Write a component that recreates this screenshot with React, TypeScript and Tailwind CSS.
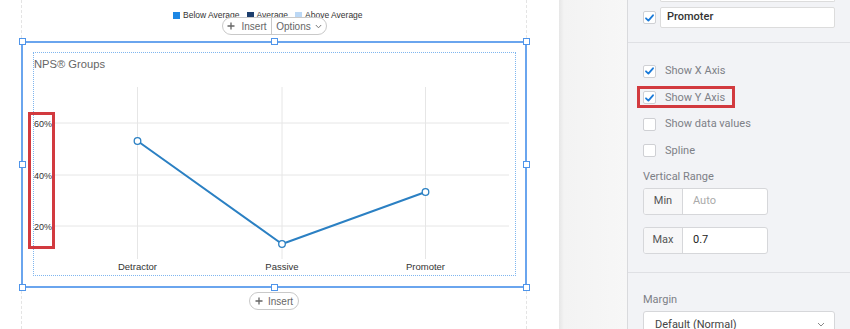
import React from "react";

const Check = ({ checked }: { checked?: boolean }) => (
  <div className="flex h-[13px] w-[13px] shrink-0 items-center justify-center rounded-[2px] border border-[#cfd0d4] bg-white">
    {checked && (
      <svg width="9" height="8" viewBox="0 0 9 8">
        <path d="M1 4.3 L3.4 6.6 L8 1.3" fill="none" stroke="#1a7ad9" strokeWidth="1.8" strokeLinecap="round" strokeLinejoin="round" />
      </svg>
    )}
  </div>
);

const PlusIcon = () => (
  <svg width="8" height="8" viewBox="0 0 8 8">
    <path d="M4 0.5 V7.5 M0.5 4 H7.5" stroke="#666" strokeWidth="1.3" />
  </svg>
);

const Handle = ({ cls }: { cls: string }) => (
  <div className={`absolute h-[7px] w-[7px] border border-[#4f95ea] bg-white ${cls}`} />
);

const Chart = () => {
  const pts = [
    [103.5, 64],
    [248, 167],
    [391.5, 115],
  ];
  return (
    <svg width="481" height="198" className="block">
      {[46, 98, 149].map((y) => (
        <line key={y} x1="19" x2="475" y1={y} y2={y} stroke="#e6e6e6" strokeWidth="1" />
      ))}
      {[103.5, 248, 391.5].map((x) => (
        <line key={x} x1={x} x2={x} y1="10" y2="182" stroke="#e6e6e6" strokeWidth="1" />
      ))}
      {[
        ["60%", 50],
        ["40%", 101.5],
        ["20%", 152.5],
      ].map(([t, y]) => (
        <text key={t as string} x="0" y={y as number} fontSize="9" fill="#333" fontFamily="'Liberation Sans', Arial, sans-serif">
          {t}
        </text>
      ))}
      <polyline
        points={pts.map((p) => p.join(",")).join(" ")}
        fill="none"
        stroke="#2b80c3"
        strokeWidth="2"
        strokeLinejoin="round"
      />
      {pts.map(([x, y]) => (
        <circle key={x} cx={x} cy={y} r="3.3" fill="#fff" stroke="#2b80c3" strokeWidth="1.3" />
      ))}
      {[
        ["Detractor", 103.5],
        ["Passive", 248],
        ["Promoter", 391.5],
      ].map(([t, x]) => (
        <text key={t as string} x={x as number} y="192.5" textAnchor="middle" fontSize="9.5" fill="#333" fontFamily="'Liberation Sans', Arial, sans-serif">
          {t}
        </text>
      ))}
    </svg>
  );
};

export default function App() {
  return (
    <div className="flex h-[329px] w-[850px] overflow-hidden bg-white">
      {/* Left page */}
      <div className="relative h-full w-[559px] shrink-0 bg-white font-['Liberation_Sans',Arial,sans-serif]">
        <div className="ml-[21px] flex h-full w-[506px] flex-col border-x border-dashed border-[#e4e4e4]">
          {/* legend of previous chart */}
          <div className="mt-[11px] flex h-[9px] items-center pl-[151px] text-[8.5px] leading-none text-[#333]">
            <span className="mr-[3px] h-[7px] w-[7px] bg-[#1d87e4]" />
            <span className="mr-[7px]">Below Average</span>
            <span className="mr-[3px] h-[7px] w-[7px] bg-[#1d3f6e]" />
            <span className="mr-[7px]">Average</span>
            <span className="mr-[3px] h-[7px] w-[7px] bg-[#bcd8f5]" />
            <span>Above Average</span>
          </div>
          {/* selected chart */}
          <div className="-mx-px mt-[21px] h-[247px] border-2 border-[#6aa5ee] pb-[10px] pl-[10px] pr-[9px] pt-[9px]">
            <div className="h-[224px] w-[483px] border border-dotted border-[#7fb6ef]">
              <div className="h-[24px] pt-[4px] text-[11.2px] leading-[14px] text-[#666]">NPS® Groups</div>
              <Chart />
            </div>
          </div>
          {/* bottom insert */}
          <div className="mt-[4px] flex h-[18px] w-[50px] items-center justify-center gap-[5px] self-center rounded-full border border-[#c9c9c9] bg-white text-[10px] text-[#666]">
            <PlusIcon />
            <span>Insert</span>
          </div>
        </div>

        {/* top insert / options pill */}
        <div className="absolute left-[222px] top-[17px] flex h-[18px] w-[105px] items-center rounded-full border border-[#c9c9c9] bg-white text-[10px] text-[#666]">
          <div className="flex h-full w-[49px] items-center justify-center gap-[6px] border-r border-[#c9c9c9]">
            <PlusIcon />
            <span>Insert</span>
          </div>
          <div className="flex flex-1 items-center justify-center gap-[4px]">
            <span>Options</span>
            <svg width="7" height="5" viewBox="0 0 7 5">
              <path d="M0.8 1 L3.5 3.8 L6.2 1" fill="none" stroke="#777" strokeWidth="1" />
            </svg>
          </div>
        </div>

        {/* handles */}
        <Handle cls="left-[19px] top-[38px]" />
        <Handle cls="left-[271px] top-[38px]" />
        <Handle cls="left-[523px] top-[38px]" />
        <Handle cls="left-[19px] top-[161px]" />
        <Handle cls="left-[523px] top-[161px]" />
        <Handle cls="left-[19px] top-[284px]" />
        <Handle cls="left-[271px] top-[284px]" />
        <Handle cls="left-[523px] top-[284px]" />

        {/* red annotation */}
        <div className="absolute left-[28px] top-[112px] h-[137px] w-[27px] border-[3px] border-[#d23a3f]" />
      </div>

      {/* middle gap */}
      <div className="h-full w-[68px] shrink-0 bg-[linear-gradient(to_right,#e6e6e6,#f3f3f3_5px,#f7f7f7)]" />

      {/* sidebar */}
      <div className="relative h-full flex-1 border-l border-[#d9dadd] bg-[#f2f3f6] font-['Roboto',sans-serif]">
        <div className="h-[43px] border-b border-[#dfe0e4] pl-[15px] pr-[15px]">
          <div className="ml-[17px] h-[2px] rounded-b-[2px] border border-t-0 border-[#dcdcdc] bg-white" />
          <div className="mt-[5px] flex items-center gap-[4px]">
            <Check checked />
            <div className="flex h-[21px] flex-1 items-center rounded-[2px] border border-[#dcdcdc] bg-white pl-[6px] text-[11px] font-medium text-[#333]">
              Promoter
            </div>
          </div>
        </div>

        <div className="border-b border-[#dfe0e4] pl-[15px] pr-[15px] pt-[15px] pb-[18px]">
          {[
            ["Show X Axis", true],
            ["Show Y Axis", true],
            ["Show data values", false],
            ["Spline", false],
          ].map(([t, c]) => (
            <div key={t as string} className="flex h-[26.5px] items-center gap-[9px]">
              <Check checked={c as boolean} />
              <span className="text-[11px] text-[#7d8086]">{t}</span>
            </div>
          ))}
          <div className="mt-[5px] h-[16px] text-[11px] leading-[16px] text-[#7d8086]">Vertical Range</div>
          <div className="mt-[2.5px] flex h-[27px] w-[125px] overflow-hidden rounded-[3px] border border-[#d6d7da] bg-white">
            <div className="flex w-[39px] items-center justify-center border-r border-[#d6d7da] bg-[#f7f7f8] text-[11px] text-[#555]">
              Min
            </div>
            <div className="flex items-center pl-[10px] text-[11px] text-[#aaa]">Auto</div>
          </div>
          <div className="mt-[12px] flex h-[27px] w-[125px] overflow-hidden rounded-[3px] border border-[#d6d7da] bg-white">
            <div className="flex w-[39px] items-center justify-center border-r border-[#d6d7da] bg-[#f7f7f8] text-[11px] text-[#555]">
              Max
            </div>
            <div className="flex items-center pl-[10px] text-[11px] text-[#222]">0.7</div>
          </div>
        </div>

        <div className="pl-[15px] pr-[15px] pt-[19px]">
          <div className="h-[16px] text-[11px] leading-[16px] text-[#7d8086]">Margin</div>
          <div className="mt-[3px] flex h-[28px] items-center justify-between rounded-[3px] border border-[#d6d7da] bg-white pl-[11px] pr-[9px] text-[11px] leading-[14px] text-[#444]">
            <span>Default (Normal)</span>
            <svg width="8" height="5" viewBox="0 0 8 5">
              <path d="M1 1 L4 4 L7 1" fill="none" stroke="#888" strokeWidth="1" />
            </svg>
          </div>
        </div>

        {/* red annotation */}
        <div className="absolute left-[9px] top-[86px] h-[22px] w-[98px] border-[3px] border-[#d23a3f]" />
      </div>
    </div>
  );
}
